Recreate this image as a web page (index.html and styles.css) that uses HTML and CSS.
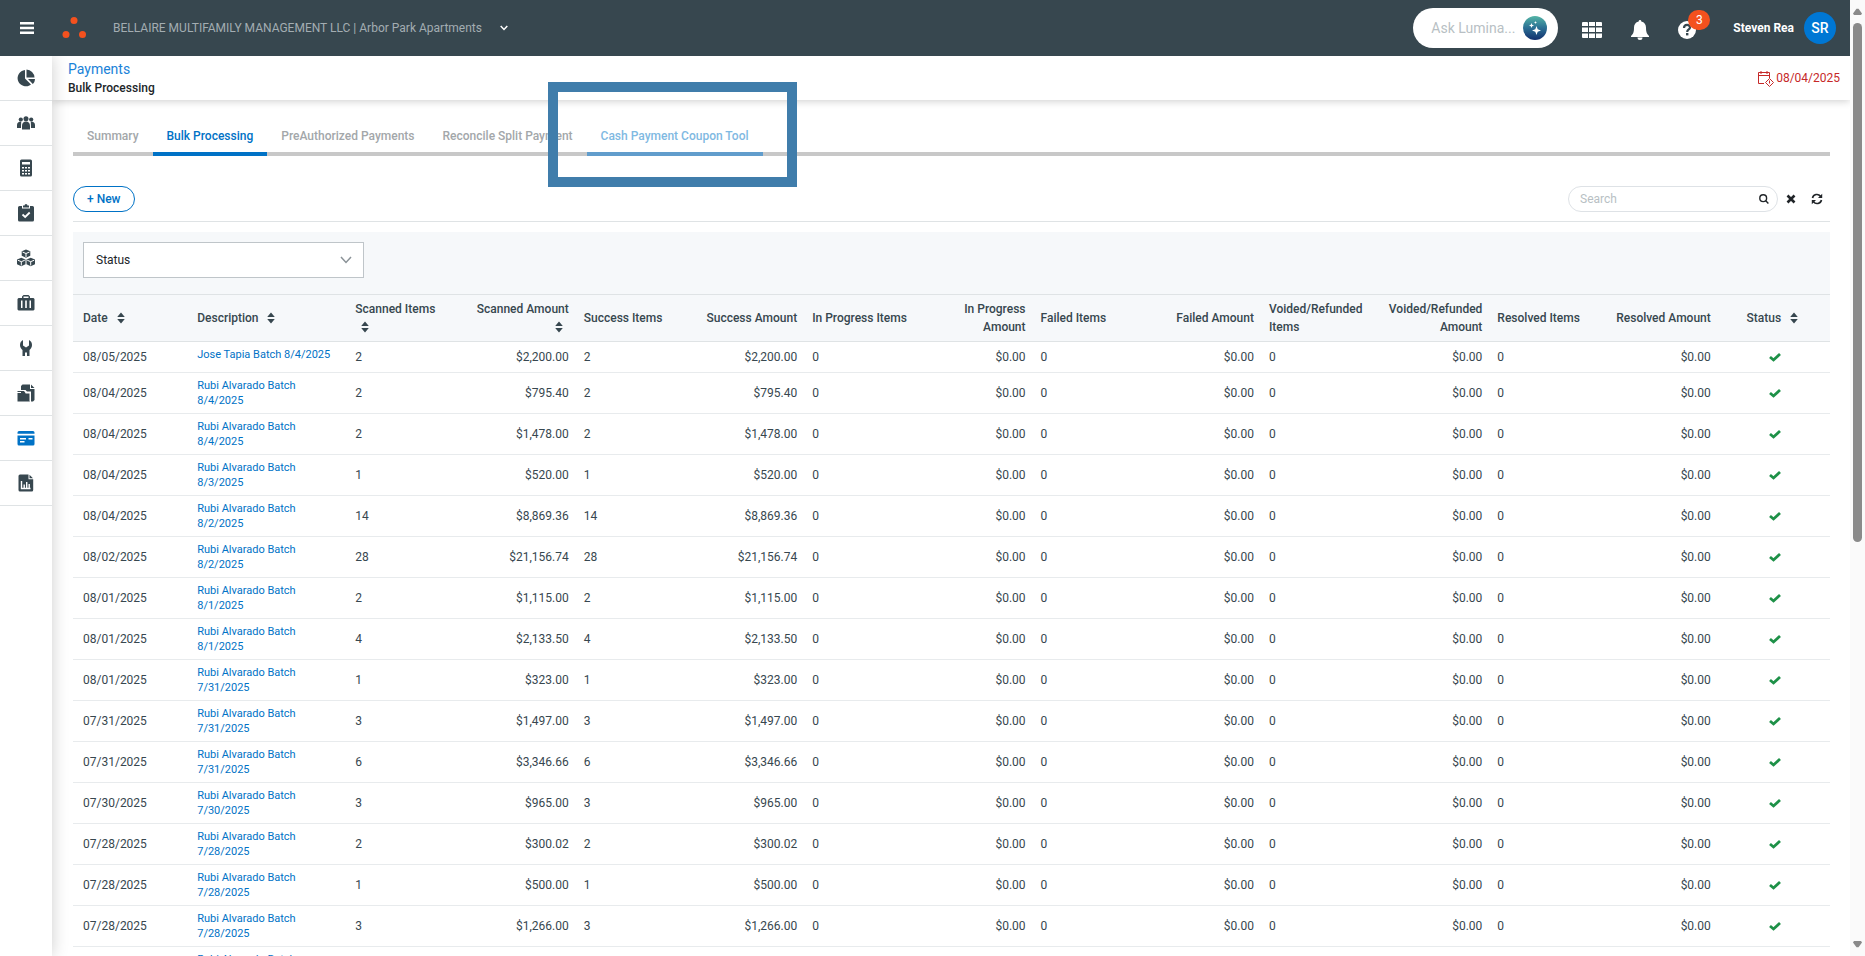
FILE: index.html
```html
<!DOCTYPE html>
<html lang="en">
<head>
    <meta charset="UTF-8">
    <meta name="viewport" content="width=device-width, initial-scale=1.0">
    <title>Payments - Bulk Processing</title>
    <link rel="stylesheet" href="styles.css">
</head>
<body>
    <!-- Shared icons -->
    <svg class="sprite" aria-hidden="true">
        <symbol id="sort" viewBox="0 0 8 12"><path d="M4 .5 7.800 5H.2zM4 11.500.2 7h7.600z"/></symbol>
        <symbol id="check" viewBox="0 0 12 10"><path d="M1 5 4.500 8 11 2" fill="none" stroke="currentColor" stroke-width="2.800"/></symbol>
    </svg>

    <div class="page">
        <div class="app">
            <header class="topbar">
                <button class="icon-btn menu-btn" aria-label="Menu">
                    <svg width="14" height="14" viewBox="0 0 14 14"><path d="M0 1h14v2.500H0zM0 5.800h14v2.500H0zM0 10.500h14V13H0z"/></svg>
                </button>
                <svg class="logo" width="26" height="26" viewBox="0 0 26 26"><circle cx="13" cy="5.500" r="3.500"/><circle cx="5" cy="19.500" r="3.500"/><circle cx="21.500" cy="19.500" r="3.500"/></svg>
                <button class="property">
                    <span>BELLAIRE MULTIFAMILY MANAGEMENT LLC | Arbor Park Apartments</span>
                    <svg width="8" height="6" viewBox="0 0 8 6"><path d="M.7 1 4 4.500 7.300 1" fill="none" stroke="#fff" stroke-width="1.500"/></svg>
                </button>

                <div class="top-right">
                    <div class="lumina">
                        <input type="text" placeholder="Ask Lumina..." aria-label="Ask Lumina">
                        <svg width="24" height="24" viewBox="0 0 24 24">
                            <defs><linearGradient id="lum" x1="0" y1="0" x2="0" y2="1"><stop offset="0" stop-color="#54b5a6"/><stop offset=".5" stop-color="#2b6f94"/><stop offset="1" stop-color="#12306e"/></linearGradient></defs>
                            <circle cx="12" cy="12" r="12" fill="url(#lum)"/>
                            <path fill="#fff" d="M13.500 10l1.200 3.300 3.300 1.200-3.300 1.200-1.200 3.300-1.200-3.300L9 14.500l3.300-1.200zM8.500 7l.7 1.800 1.800.7-1.800.7-.7 1.800-.7-1.800L6 9.500l1.800-.7zM12.500 5l.4 1.100 1.100.4-1.100.4-.4 1.100-.4-1.100-1.100-.4 1.100-.4z"/>
                        </svg>
                    </div>
                    <button class="icon-btn" aria-label="Apps">
                        <svg width="20" height="20" viewBox="0 0 20 20"><path d="M1 2h4a1 1 0 0 1 1 1v3H0V3a1 1 0 0 1 1-1zM7 2h6v4H7zM14 2h5a1 1 0 0 1 1 1v3h-6zM0 7.500h6v4.500H0zM7 7.500h6v4.500H7zM14 7.500h6v4.500h-6zM0 13.500h6V18H1a1 1 0 0 1-1-1zM7 13.500h6V18H7zM14 13.500h6V17a1 1 0 0 1-1 1h-5z"/></svg>
                    </button>
                    <button class="icon-btn" aria-label="Notifications">
                        <svg width="20" height="20" viewBox="0 0 20 20"><path d="M10 0c.8 0 1.300.6 1.300 1.400C14.500 2 16 4.500 16 7.500c0 5 1 6.500 3 8.500v1H1v-1c2-2 3-3.500 3-8.500C4 4.500 5.500 2 8.700 1.400 8.700.6 9.200 0 10 0zM7.500 17.500h5a2.500 2.500 0 0 1-5 0z"/></svg>
                    </button>
                    <button class="icon-btn help" aria-label="Help">
                        <svg width="18" height="18" viewBox="0 0 18 18"><circle cx="9" cy="9" r="9"/><path d="M6 7c0-4 6-4 6-.5C12 8.500 9.200 8.500 9.200 11" fill="none" stroke="#37474f" stroke-width="2.200"/><rect x="8" y="12" width="2.400" height="2.400" fill="#37474f"/></svg>
                        <span class="badge">3</span>
                    </button>
                    <span class="user">Steven Rea</span>
                    <span class="avatar">SR</span>
                </div>
            </header>

            <div class="body">
                <nav class="rail">
                    <a href="#" aria-label="Dashboard"><svg viewBox="0 0 18 18"><path d="M8 1v8.500l6 6A8.200 8.200 0 1 1 8 1zM9.500.5a8.300 8.300 0 0 1 8 8h-8zM11 10h7c-.2 2-.8 4-2.200 5z"/></svg></a>
                    <a href="#" aria-label="People"><svg viewBox="0 0 18 18"><circle cx="9" cy="4.800" r="2.500"/><circle cx="3.800" cy="5.500" r="2.100"/><circle cx="14.200" cy="5.500" r="2.100"/><path d="M5 15.500V12c0-3 1.500-4.500 4-4.500s4 1.500 4 4.500v3.500zM0 14v-3c0-2 1.500-3.500 4.200-3.500C4.300 9 4 10 4 14zM18 14v-3c0-2-1.500-3.500-4.200-3.500C13.700 9 14 10 14 14z"/></svg></a>
                    <a href="#" aria-label="Accounting"><svg viewBox="0 0 18 18"><path fill-rule="evenodd" d="M4.500.5h9A1.500 1.500 0 0 1 15 2v14a1.500 1.500 0 0 1-1.500 1.500h-9A1.500 1.500 0 0 1 3 16V2A1.500 1.500 0 0 1 4.500.5zM5 3v2.500h8V3zM5 8v1.600h2V8zM8 8v1.600h2V8zM11 8v1.600h2V8zM5 11v1.600h2V11zM8 11v1.600h2V11zM11 11v1.600h2V11zM5 14v1.600h2V14zM8 14v1.600h2V14zM11 14v1.600h2V14z"/></svg></a>
                    <a href="#" aria-label="Tasks"><svg viewBox="0 0 18 18"><path d="M2.500 2H5v2.500h8V2h2.500A1.500 1.500 0 0 1 17 3.500V16a1.500 1.500 0 0 1-1.500 1.500h-13A1.500 1.500 0 0 1 1 16V3.500A1.500 1.500 0 0 1 2.500 2zM6 1.500h1.500a1.500 1.500 0 0 1 3 0H12v2H6z"/><path d="m5.500 10.500 2.700 2.500 4.500-4.500" fill="none" stroke="#fff" stroke-width="1.800"/></svg></a>
                    <a href="#" aria-label="Inventory"><svg viewBox="0 0 18 18"><path d="m9 .5 4.300 1.800v4.400L9 8.700 4.700 6.700V2.300zM4.300 8.800l4.200 1.700v4.700l-4.200 2L0 15.200v-4.700zM13.700 8.800l4.300 1.700v4.700l-4.300 2-4.200-2v-4.700z"/><path d="M5.500 3 9 4.500 12.500 3M9 4.500V8M.8 11.200l3.500 1.500 3.500-1.500M4.300 12.700v3.800M10.200 11.200l3.500 1.500 3.500-1.500M13.700 12.700v3.800" fill="none" stroke="#fff"/></svg></a>
                    <a href="#" aria-label="Portfolio"><svg viewBox="0 0 18 18"><path fill-rule="evenodd" d="M5 4V2.500L6.500 1h5L13 2.500V4h3.500L17.500 5v10.500l-1 1h-15l-1-1V5l1-1zM6.500 4h5V2.500h-5zM4 6.500v7.500h1.500V6.500zM8.200 6.500v7.500h1.600V6.500zM12.500 6.500v7.500H14V6.500z"/></svg></a>
                    <a href="#" aria-label="Maintenance"><svg viewBox="0 0 18 18"><path d="M6 1v5.500L9 8.500l3-2V1c2 1 3 2.700 3 5 0 2-1 3.700-2.500 5v6H10v-3.500H8V17H5.500v-6C4 9.700 3 8 3 6c0-2.300 1-4 3-5z"/></svg></a>
                    <a href="#" aria-label="Documents"><svg viewBox="0 0 18 18"><path d="M4 6V2l1.500-1.500H13V5h4.500v11L16 17.500h-2V7.500h-4L8.500 6zM14 .5 17.500 4H14zM.5 7H7l1.500 2H13v8.500H.5z"/><path d="M0 8.500h4M8.500 9H13v8.500" fill="none" stroke="#fff" stroke-width="1"/></svg></a>
                    <a href="#" class="current" aria-label="Payments"><svg viewBox="0 0 18 18"><path d="M2 2h14a1.500 1.500 0 0 1 1.500 1.500v1.300H.5V3.500A1.500 1.500 0 0 1 2 2zM.5 6.500h17V15a1.500 1.500 0 0 1-1.500 1.500H2A1.500 1.500 0 0 1 .5 15z"/><path d="M3 9.700h6M11.500 9.700h4M3 12.700h4.500" stroke="#fff" stroke-width="1.500"/></svg></a>
                    <a href="#" aria-label="Reports"><svg viewBox="0 0 18 18"><path d="M3 .5h8.500v4.700h4.700V16a1.500 1.500 0 0 1-1.500 1.500H3A1.500 1.500 0 0 1 1.500 16V2A1.500 1.500 0 0 1 3 .5zM12.500.8 16 4.300h-3.500z"/><path d="M4.500 7v7.500h9M7.200 14v-3.500M9.700 14V8M12.200 14v-4" fill="none" stroke="#fff" stroke-width="1.400"/></svg></a>
                </nav>

                <div class="content">
                    <div class="subheader">
                        <div>
                            <a href="#" class="crumb">Payments</a>
                            <h1>Bulk Processing</h1>
                        </div>
                        <span class="today">
                            <svg width="17" height="17" viewBox="0 0 17 17" fill="none" stroke="currentColor"><path d="M7 13.500H1.500v-11h11V8M1.500 5.500h11M4 1v3M10 1v3M12.500 8.500 16.500 12.500l-4 4-4-4zM12.500 10.500v3"/></svg>
                            08/04/2025
                        </span>
                    </div>

                    <main>
                        <nav class="tabs">
                            <a href="#">Summary</a>
                            <a href="#" class="active">Bulk Processing</a>
                            <a href="#">PreAuthorized Payments</a>
                            <a href="#">Reconcile Split Payment</a>
                            <a href="#" class="hovered">Cash Payment Coupon Tool<span class="callout"></span></a>
                        </nav>

                        <div class="toolbar">
                            <button class="new-btn">+ New</button>
                            <div class="tools">
                                <div class="search">
                                    <input type="text" placeholder="Search" aria-label="Search">
                                    <svg width="10" height="10" viewBox="0 0 10 10" fill="none" stroke="#212529" stroke-width="1.400"><circle cx="4.200" cy="4.200" r="3.400"/><path d="m6.700 6.700 2.700 2.700"/></svg>
                                </div>
                                <button class="icon-btn" aria-label="Clear search"><svg width="10" height="10" viewBox="0 0 10 10"><path d="m1.500 1.500 7 7m0-7-7 7" stroke="#212529" stroke-width="2.600"/></svg></button>
                                <button class="icon-btn" aria-label="Refresh"><svg width="12" height="12" viewBox="0 0 12 12"><path d="M1.500 5a4.500 4.500 0 0 1 8-1.700M10.500 7a4.500 4.500 0 0 1-8 1.700" fill="none" stroke="#212529" stroke-width="1.600"/><path d="M11.200.8V5H7zM.8 11.200V7H5z" fill="#212529"/></svg></button>
                            </div>
                        </div>

                        <div class="filters">
                            <div class="select">
                                <select aria-label="Status"><option>Status</option></select>
                                <svg width="12" height="8" viewBox="0 0 12 8"><path d="m1 1 5 5.500L11 1" fill="none" stroke="#8a9297" stroke-width="1.500"/></svg>
                            </div>
                        </div>

                        <table>
                            <thead>
                                <tr>
                                    <th>Date <svg class="sort"><use href="#sort"/></svg></th>
                                    <th class="desc">Description <svg class="sort"><use href="#sort"/></svg></th>
                                    <th>Scanned Items <svg class="sort"><use href="#sort"/></svg></th>
                                    <th class="num">Scanned Amount <svg class="sort"><use href="#sort"/></svg></th>
                                    <th>Success Items</th>
                                    <th class="num">Success Amount</th>
                                    <th>In Progress Items</th>
                                    <th class="num">In Progress Amount</th>
                                    <th>Failed Items</th>
                                    <th class="num">Failed Amount</th>
                                    <th>Voided/Refunded Items</th>
                                    <th class="num">Voided/Refunded Amount</th>
                                    <th>Resolved Items</th>
                                    <th class="num">Resolved Amount</th>
                                    <th class="status">Status <svg class="sort"><use href="#sort"/></svg></th>
                                </tr>
                            </thead>
                            <tbody id="batches"></tbody>
                        </table>
                    </main>
                </div>
            </div>
        </div>

        <div class="scrollbar" aria-hidden="true">
            <svg width="9" height="7" viewBox="0 0 9 7"><path d="M3.500.8h2L9 5.500 8 7H1L0 5.500z"/></svg>
            <div class="track"><div class="thumb"></div></div>
            <svg width="9" height="7" viewBox="0 0 9 7"><path d="M3.500 6.200h2L9 1.500 8 0H1L0 1.500z"/></svg>
        </div>
    </div>

    <script>
    // date, description, item count, amount
    const batches = [
        ['08/05/2025', 'Jose Tapia Batch 8/4/2025', 2, '$2,200.00'],
        ['08/04/2025', 'Rubi Alvarado Batch 8/4/2025', 2, '$795.40'],
        ['08/04/2025', 'Rubi Alvarado Batch 8/4/2025', 2, '$1,478.00'],
        ['08/04/2025', 'Rubi Alvarado Batch 8/3/2025', 1, '$520.00'],
        ['08/04/2025', 'Rubi Alvarado Batch 8/2/2025', 14, '$8,869.36'],
        ['08/02/2025', 'Rubi Alvarado Batch 8/2/2025', 28, '$21,156.74'],
        ['08/01/2025', 'Rubi Alvarado Batch 8/1/2025', 2, '$1,115.00'],
        ['08/01/2025', 'Rubi Alvarado Batch 8/1/2025', 4, '$2,133.50'],
        ['08/01/2025', 'Rubi Alvarado Batch 7/31/2025', 1, '$323.00'],
        ['07/31/2025', 'Rubi Alvarado Batch 7/31/2025', 3, '$1,497.00'],
        ['07/31/2025', 'Rubi Alvarado Batch 7/31/2025', 6, '$3,346.66'],
        ['07/30/2025', 'Rubi Alvarado Batch 7/30/2025', 3, '$965.00'],
        ['07/28/2025', 'Rubi Alvarado Batch 7/28/2025', 2, '$300.02'],
        ['07/28/2025', 'Rubi Alvarado Batch 7/28/2025', 1, '$500.00'],
        ['07/28/2025', 'Rubi Alvarado Batch 7/28/2025', 3, '$1,266.00'],
        ['07/28/2025', 'Rubi Alvarado Batch 7/28/2025', 2, '$845.00']
    ];

    function renderBatches() {
        const empty = '<td>0</td><td class="num">$0.00</td>';
        document.getElementById('batches').innerHTML = batches.map(([date, name, items, amount]) => `
            <tr>
                <td>${date}</td>
                <td class="desc"><a href="#">${name}</a></td>
                <td>${items}</td>
                <td class="num">${amount}</td>
                <td>${items}</td>
                <td class="num">${amount}</td>
                ${empty.repeat(4)}
                <td class="status"><svg class="check" role="img" aria-label="Complete"><use href="#check"/></svg></td>
            </tr>
        `).join('');
    }

    renderBatches();
    </script>
</body>
</html>
```
FILE: styles.css
```css
* {
    box-sizing: border-box;
}

body {
    margin: 0;
    font-family: Roboto, Arial, sans-serif;
    font-size: 12px;
    line-height: 20px;
    color: #37474f;
    background-color: #fff;
}

a {
    color: #0072c6;
    text-decoration: none;
}

button,
input,
select {
    font: inherit;
    color: inherit;
}

input::placeholder {
    color: #b8bfc4;
    opacity: 1;
}

svg {
    flex: none;
}

.sprite {
    display: none;
}

.page {
    display: flex;
    height: 100vh;
    overflow: hidden;
}

.app {
    flex: 1;
    min-width: 0;
    display: flex;
    flex-direction: column;
}

.icon-btn {
    display: flex;
    padding: 0;
    border: none;
    background: none;
    fill: #fff;
    cursor: pointer;
}

/* Top bar */
.topbar {
    display: flex;
    align-items: center;
    flex: none;
    height: 56px;
    padding: 0 14px 0 20px;
    background-color: #37474f;
    color: #fff;
    position: relative;
    z-index: 3;
}

.logo {
    margin: 0 26px 0 27px;
    fill: #f4511e;
}

.property {
    display: flex;
    align-items: center;
    gap: 18px;
    padding: 0;
    border: none;
    background: none;
    color: #a3adb2;
}

.top-right {
    display: flex;
    align-items: center;
    margin-left: auto;
}

.top-right .icon-btn {
    margin: 3px 0 0 28px;
}

.lumina {
    display: flex;
    align-items: center;
    width: 145px;
    height: 40px;
    padding: 0 11px 0 18px;
    margin-right: -4px;
    border-radius: 20px;
    background-color: #fff;
}

.lumina input {
    flex: 1;
    min-width: 0;
    padding: 0;
    border: none;
    outline: none;
    background: none;
    font-size: 14px;
}

.help {
    position: relative;
}

.badge {
    position: absolute;
    top: -11px;
    left: 10px;
    width: 22px;
    height: 20px;
    border-radius: 10px;
    background-color: #f4511e;
    color: #fff;
}

.user {
    margin: 0 10px 0 37px;
    font-weight: 700;
}

.avatar {
    width: 32px;
    line-height: 32px;
    border-radius: 50%;
    background-color: #0077d4;
    font-size: 14px;
    font-weight: 500;
    text-align: center;
}

/* Side rail */
.body {
    flex: 1;
    display: flex;
    min-height: 0;
}

.rail {
    flex: none;
    width: 52px;
    background-color: #fff;
    box-shadow: 0 0 16px rgba(0, 0, 0, 0.2);
    position: relative;
    z-index: 2;
}

.rail a {
    display: flex;
    align-items: center;
    justify-content: center;
    height: 45px;
    border-bottom: 1px solid #dfe3e5;
}

.rail svg {
    width: 18px;
    height: 18px;
    fill: #37474f;
}

.rail .current svg {
    fill: #0072c6;
}

.content {
    flex: 1;
    min-width: 0;
    overflow: hidden;
}

.subheader {
    display: flex;
    align-items: center;
    justify-content: space-between;
    height: 44px;
    padding: 0 10px 0 16px;
    box-shadow: 0 1px 8px rgba(0, 0, 0, 0.2);
}

.crumb {
    display: block;
    padding-top: 2px;
    font-size: 14px;
    line-height: 18px;
    color: #1a82d8;
}

h1 {
    margin: 0;
    font-size: 12px;
    font-weight: 500;
    line-height: 20px;
    color: #212529;
}

.today {
    display: flex;
    align-items: center;
    gap: 2px;
    color: #c62828;
}

main {
    padding: 21px 20px 0 21px;
}

/* Tabs */
.tabs {
    display: flex;
    border-bottom: 4px solid #c8c8c8;
}

.tabs a {
    height: 35px;
    margin-bottom: -4px;
    padding: 5px 14px 0;
    border-bottom: 4px solid transparent;
    font-weight: 500;
    color: #a3a7aa;
}

.tabs .active {
    color: #0072c6;
    border-color: #0072c6;
}

.tabs .hovered {
    position: relative;
    color: #7fb9e2;
    border-color: #619dcc;
}

.callout {
    position: absolute;
    top: -39px;
    right: -34px;
    bottom: -35px;
    left: -39px;
    border: 10px solid #407dab;
}

.toolbar {
    display: flex;
    align-items: center;
    justify-content: space-between;
    padding: 30px 7px 9px 0;
    border-bottom: 1px solid #dfe3e5;
}

.new-btn {
    height: 26px;
    padding: 0 13px;
    border: 1px solid #0072c6;
    border-radius: 13px;
    background-color: #fff;
    font-weight: 500;
    color: #0072c6;
}

.tools {
    display: flex;
    align-items: center;
    gap: 15px;
}

.search {
    display: flex;
    align-items: center;
    width: 210px;
    height: 26px;
    padding: 0 8px 0 11px;
    margin-right: -7px;
    border: 1px solid #dee2e6;
    border-radius: 13px;
}

.search input {
    flex: 1;
    min-width: 0;
    padding: 0;
    border: none;
    outline: none;
}

.filters {
    margin-top: 10px;
    padding: 10px 10px 16px;
    background-color: #f6f8fa;
}

.select {
    display: flex;
    align-items: center;
    width: 281px;
    position: relative;
}

.select select {
    width: 100%;
    height: 36px;
    padding: 0 12px;
    border: 1px solid #bfc5c9;
    background-color: #fff;
    color: #212529;
    appearance: none;
}

.select svg {
    position: absolute;
    right: 12px;
    pointer-events: none;
}

/* Batch table */
table {
    width: 100%;
    table-layout: fixed;
    border-collapse: collapse;
}

th,
td {
    padding: 5px 5px 5px 10px;
    text-align: left;
    border-bottom: 1px solid #e8ebed;
}

th {
    font-weight: 500;
    line-height: 18px;
    background-color: #f6f8fa;
    border-top: 1px solid #dfe3e5;
    border-bottom-color: #dfe3e5;
}

th.desc {
    width: 9%;
}

td.desc {
    vertical-align: top;
}

td.desc a {
    display: block;
    font-size: 11px;
    line-height: 15px;
}

th.num,
td.num {
    text-align: right;
}

th.status,
td.status {
    text-align: center;
}

.sort {
    width: 8px;
    height: 12px;
    margin: 0 6px;
    vertical-align: -2px;
    fill: #37474f;
}

.check {
    width: 12px;
    height: 10px;
    vertical-align: -1px;
    color: #1e9148;
}

/* Scrollbar */
.scrollbar {
    flex: none;
    width: 15px;
    display: flex;
    flex-direction: column;
    align-items: center;
    gap: 8px;
    padding: 8px 0;
    background-color: #fafafa;
    fill: #8a8a8a;
}

.track {
    flex: 1;
}

.thumb {
    width: 9px;
    height: 57%;
    border-radius: 5px;
    background-color: #8a8a8a;
}
```
